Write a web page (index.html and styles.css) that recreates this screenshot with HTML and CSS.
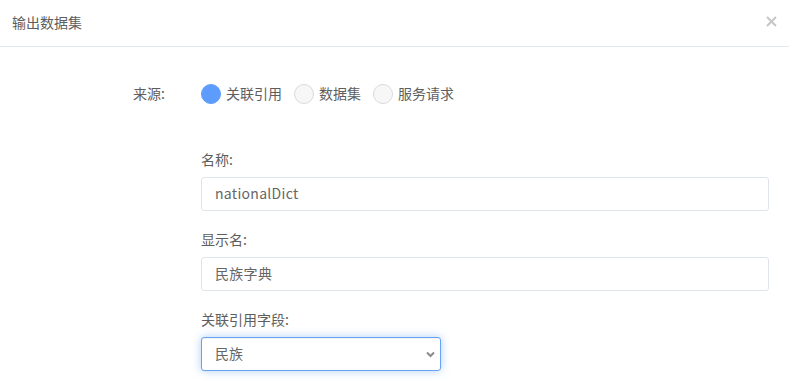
FILE: index.html
```html
<!DOCTYPE html>
<html lang="zh-CN">
<head>
    <meta charset="UTF-8">
    <title>输出数据集</title>
    <link rel="stylesheet" href="styles.css">
</head>
<body>

<div class="modal">
    <div class="modal-header">
        <h4 class="modal-title">输出数据集</h4>
        <button type="button" class="modal-close" aria-label="关闭">
            <svg width="11" height="11" viewBox="0 0 11 11">
                <path d="M1 1 L10 10 M10 1 L1 10" stroke="#c6c6c6" stroke-width="2" fill="none"/>
            </svg>
        </button>
    </div>

    <div class="modal-body">
        <div class="source-row">
            <span class="source-label">来源:</span>
            <label class="radio-item">
                <input type="radio" name="source" class="radio-input" checked>
                <span>关联引用</span>
            </label>
            <label class="radio-item">
                <input type="radio" name="source" class="radio-input">
                <span>数据集</span>
            </label>
            <label class="radio-item">
                <input type="radio" name="source" class="radio-input">
                <span>服务请求</span>
            </label>
        </div>

        <div class="form-group">
            <label for="name" class="form-label">名称:</label>
            <input type="text" id="name" class="form-input" value="nationalDict">
        </div>

        <div class="form-group">
            <label for="display" class="form-label">显示名:</label>
            <input type="text" id="display" class="form-input" value="民族字典">
        </div>

        <div class="form-group">
            <label for="field" class="form-label">关联引用字段:</label>
            <div class="select-wrap">
                <select id="field" class="form-select">
                    <option>民族</option>
                </select>
                <svg class="select-arrow" width="9" height="7" viewBox="0 0 9 7">
                    <path d="M1 1.5 L4.5 5 L8 1.5" stroke="#8a8a8a" stroke-width="2" fill="none"/>
                </svg>
            </div>
        </div>
    </div>
</div>

</body>
</html>
```

FILE: styles.css
```css
body {
    font-family: "Noto Sans CJK SC", "Noto Sans", sans-serif;
    font-size: 14px;
    color: #5e5e5e;
    margin: 0;
    padding: 0;
    background-color: #fff;
}

.modal-header {
    display: flex;
    align-items: center;
    justify-content: space-between;
    height: 46px;
    padding: 0 12px;
    border-bottom: 1px solid #e3e8ef;
}

.modal-title {
    margin: 0 0 2px;
    font-size: 14px;
    font-weight: normal;
    color: #5e5e5e;
    line-height: 20px;
}

.modal-close {
    border: none;
    background: none;
    padding: 0;
    margin-bottom: 4px;
    display: flex;
    cursor: pointer;
}

.modal-body {
    padding: 37px 20px 0 201px;
}

.source-row {
    display: flex;
    align-items: center;
    height: 20px;
    margin-left: -68px;
    margin-bottom: 47px;
}

.source-label {
    width: 68px;
    line-height: 18px;
    margin-bottom: 2px;
}

.radio-item {
    display: flex;
    align-items: center;
    gap: 5px;
    margin-right: 12px;
    line-height: 18px;
    cursor: pointer;
}

.radio-item span {
    margin-bottom: 2px;
}

.radio-input {
    appearance: none;
    -webkit-appearance: none;
    width: 20px;
    height: 20px;
    margin: 0;
    border-radius: 50%;
    border: 1px solid #dadada;
    background-color: #f7f7f7;
}

.radio-input:checked {
    border-color: #5d9cfd;
    background-color: #5d9cfd;
}

.form-group {
    margin-bottom: 20px;
}

.form-label {
    display: block;
    line-height: 17px;
    margin-bottom: 9px;
}

.form-input {
    display: block;
    box-sizing: border-box;
    width: 100%;
    height: 34px;
    padding: 0 12px 2px 13px;
    border: 1px solid #e0e4ec;
    border-radius: 3px;
    font-family: inherit;
    font-size: 14px;
    letter-spacing: 0.3px;
    color: #666;
    outline: none;
}

.select-wrap {
    position: relative;
    width: 240px;
}

.form-select {
    appearance: none;
    -webkit-appearance: none;
    display: block;
    box-sizing: border-box;
    width: 240px;
    height: 34px;
    padding: 0 12px 2px 13px;
    border: 1px solid #66a3f0;
    border-radius: 3px;
    background-color: #fff;
    box-shadow: inset 0 1px 1px rgba(0, 0, 0, 0.05), 0 0 8px rgba(102, 160, 240, 0.5);
    font-family: inherit;
    font-size: 14px;
    color: #666;
    outline: none;
}

.select-arrow {
    position: absolute;
    right: 6px;
    top: 14px;
    pointer-events: none;
}
```
